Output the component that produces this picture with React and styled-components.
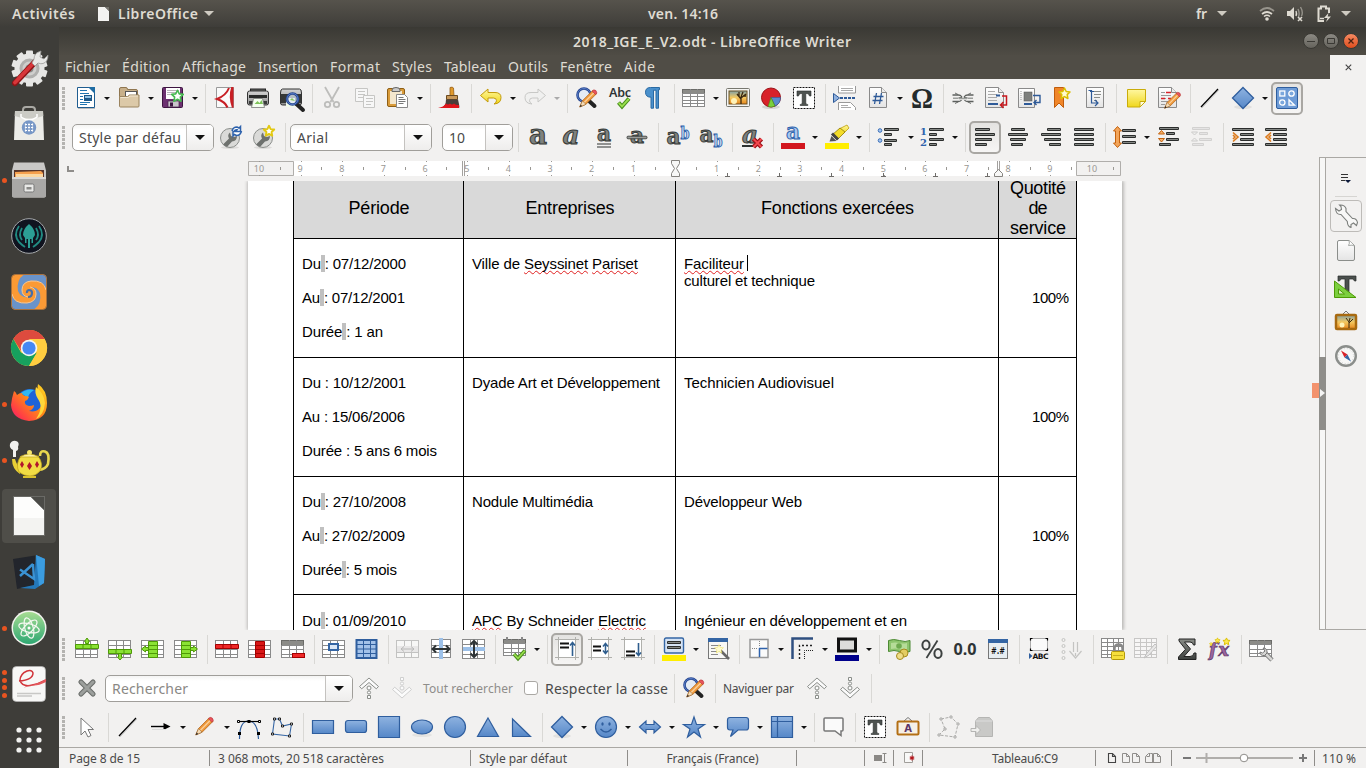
import React, { useLayoutEffect, useRef } from "react";
import styled, { createGlobalStyle, css } from "styled-components";

const UI = '"Noto Sans", "Open Sans", sans-serif';
const DOC = '"Liberation Sans", Arial, sans-serif';

const Global = createGlobalStyle`
  * { box-sizing: border-box; }
  html, body, #root { margin: 0; padding: 0; }
  body { width: 1366px; height: 768px; overflow: hidden; background: #f2f1f0; font-family: ${UI}; color: #3c3c3c; }
  svg { display: block; flex: none; }
`;

/* ---------- text fitted to a given width by letter spacing ---------- */
const FitBox = styled.span`
  display: inline-block;
  flex: none;
  white-space: pre;
  width: ${(p) => p.$w}px;
`;
function Fit({ w, children, className }) {
  const ref = useRef(null);
  useLayoutEffect(() => {
    const el = ref.current;
    const range = document.createRange();
    range.selectNodeContents(el);
    el.style.letterSpacing = "0px";
    const natural = range.getBoundingClientRect().width;
    const count = Math.max(1, el.textContent.length - 1);
    el.style.letterSpacing = `${(w - natural) / count}px`;
  }, [w]);
  return (
    <FitBox ref={ref} $w={w} className={className}>
      {children}
    </FitBox>
  );
}

/* ---------- icons ---------- */
const Defs = () => (
  <DefsSvg>
    <defs>
      <linearGradient id="blue" x1="0" y1="0" x2="0" y2="1">
        <stop offset="0" stopColor="#8fb3e0" />
        <stop offset="1" stopColor="#5587c8" />
      </linearGradient>
      <linearGradient id="paper" x1="0" y1="0" x2="0" y2="1">
        <stop offset="0" stopColor="#ffffff" />
        <stop offset="1" stopColor="#e4e4e4" />
      </linearGradient>
      <linearGradient id="gold" x1="0" y1="0" x2="0" y2="1">
        <stop offset="0" stopColor="#fff7a0" />
        <stop offset="1" stopColor="#f0d71c" />
      </linearGradient>
      <linearGradient id="sunset" x1="0" y1="0" x2="0" y2="1">
        <stop offset="0" stopColor="#7fa0a8" />
        <stop offset="0.5" stopColor="#f3c860" />
        <stop offset="1" stopColor="#e8861c" />
      </linearGradient>
      <linearGradient id="metal" x1="0" y1="0" x2="0" y2="1">
        <stop offset="0" stopColor="#d4d4d4" />
        <stop offset="1" stopColor="#8f8f8f" />
      </linearGradient>
      <linearGradient id="steel" x1="0" y1="0" x2="0" y2="1">
        <stop offset="0" stopColor="#8a8d88" />
        <stop offset="1" stopColor="#3d403e" />
      </linearGradient>
      <linearGradient id="atomg" x1="0" y1="0" x2="0" y2="1">
        <stop offset="0" stopColor="#a6dc92" />
        <stop offset="1" stopColor="#2fa873" />
      </linearGradient>
      <linearGradient id="foxg" x1="1" y1="0" x2="0" y2="1">
        <stop offset="0" stopColor="#ffe226" />
        <stop offset="0.45" stopColor="#ff8a16" />
        <stop offset="0.8" stopColor="#ff3b47" />
        <stop offset="1" stopColor="#e31587" />
      </linearGradient>
    </defs>
  </DefsSvg>
);
const DefsSvg = styled.svg`
  position: absolute;
  width: 0;
  height: 0;
`;

const Bars = ({ rows, c = "#2b2d2c", m = "#858885" }) =>
  rows.map(([x, y, w], i) => (
    <g key={i}>
      <rect x={x} y={y} width={w} height="3" rx="1" fill={c} />
      <rect x={x + 1} y={y + 1} width={w - 2} height="1" fill={m} />
    </g>
  ));

const Grid = ({ x = 0, y = 3, w = 23, h = 18, cols = 3, rows = 4, c = "#8a8a8a", head }) => (
  <g>
    <rect x={x + 0.5} y={y + 0.5} width={w - 1} height={h - 1} fill="#fff" stroke={c} />
    {head && <rect x={x + 0.5} y={y + 0.5} width={w - 1} height={Math.round(h / rows)} fill="#8c8c88" stroke="#6b6b68" />}
    {Array.from({ length: rows - 1 }, (_, i) => (
      <path key={"r" + i} d={`M${x} ${Math.round(y + ((i + 1) * h) / rows) + 0.5}h${w}`} stroke={c} />
    ))}
    {Array.from({ length: cols - 1 }, (_, i) => (
      <path key={"c" + i} d={`M${Math.round(x + ((i + 1) * w) / cols) + 0.5} ${y}v${h}`} stroke={c} />
    ))}
  </g>
);

const Letter = ({ x = 12, y = 18, s = 23, w = 16, children, fill = "#7f827e", stroke = "#353937", italic }) => (
  <text
    x={x}
    y={y}
    fontSize={s}
    textAnchor="middle"
    textLength={w}
    lengthAdjust="spacingAndGlyphs"
    fontFamily="DejaVu Serif, serif"
    fontWeight="bold"
    fontStyle={italic ? "italic" : "normal"}
    fill={fill}
    stroke={stroke}
    strokeWidth="1"
  >
    {children}
  </text>
);

const Lens = ({ x = 10, y = 10, r = 6.5 }) => (
  <g>
    <path d={`M${x + 4} ${y + 5}L${x + 10.5} ${y + 11}`} stroke="#222" strokeWidth="4" strokeLinecap="round" />
    <circle cx={x} cy={y} r={r} fill="#dfe8f5" fillOpacity="0.75" stroke="#26458f" strokeWidth="2.6" />
    <circle cx={x} cy={y} r={r} fill="none" stroke="#5b82cc" strokeWidth="0.9" />
  </g>
);

const Pencil = ({ t }) => (
  <g transform={t}>
    <path d="M2 21l3-7L17 2l4 4L9 18z" fill="#ef9a3c" stroke="#b3641a" strokeWidth="0.9" />
    <path d="M7 16L19 4" stroke="#fbd09a" strokeWidth="1.5" />
    <path d="M16 3l2-1.5q3 0 3.500 3.500L20 7z" fill="#e8555c" stroke="#b02a32" strokeWidth="0.6" />
    <path d="M2 21l3-7 4 4z" fill="#f4dcb8" stroke="#8a5a22" strokeWidth="0.6" />
    <path d="M2 21l1-2.600 1.600 1.600z" fill="#222" />
  </g>
);

const Star = ({ x, y, s = 1, fill = "#fff", stroke = "#dcbf00", sw = 1.5 }) => (
  <path
    transform={`translate(${x} ${y}) scale(${s})`}
    d="M0-5.500L1.700-2 5.500-1.600 2.700 1.100 3.400 5 0 3.100-3.400 5-2.700 1.100-5.500-1.600-1.700-2z"
    fill={fill}
    stroke={stroke}
    strokeWidth={sw}
    strokeLinejoin="round"
  />
);

const Paper = ({ x = 3, y = 2, w = 18, h = 20, fold = true, stroke = "#8a8a8a" }) => (
  <g>
    <path
      d={
        fold
          ? `M${x + 0.5} ${y + 0.5}h${w - 6}l5 5v${h - 6}h-${w - 1}z`
          : `M${x + 0.5} ${y + 0.5}h${w - 1}v${h - 1}h-${w - 1}z`
      }
      fill="url(#paper)"
      stroke={stroke}
    />
    {fold && <path d={`M${x + w - 5.5} ${y + 0.5}v5h5`} fill="#ececec" stroke={stroke} />}
  </g>
);

const Chevrons = ({ down, dim }) => (
  <g
    transform={down ? "rotate(180 12 12)" : undefined}
    fill="#fbfbfb"
    stroke={dim ? "#cfcfcf" : "#8b8e8a"}
    strokeWidth="1"
    strokeLinejoin="round"
  >
    <path d="M12 2l9.500 8.500-2.200 2.300L12 6.500l-7.300 6.300-2.200-2.300z" />
    <circle cx="12" cy="12" r="2" />
    <circle cx="12" cy="16.500" r="1.600" />
    <path d="M10.500 19.500h3v3h-3z" />
  </g>
);

const AnchorFrame = ({ children }) => (
  <g>
    <path d="M3.500 0v23M20.500 0v23M0 2.500h24M0 20.500h24" stroke="#b0b0ac" />
    <rect x="4" y="3" width="16" height="17" fill="#fff" />
    {children}
  </g>
);

const TextFrame = () => (
  <g>
    <rect x="1.500" y="1.500" width="21" height="21" fill="#fff" stroke="#111" strokeDasharray="2 1" />
    <path d="M5 5h14v5h-1.500q-.5-2.500-2.500-2.500h-1.200V17q0 1.500 2 1.500v1H8.200v-1q2 0 2-1.500V7.500H9Q7 7.500 6.500 10H5z" fill="#4e5350" stroke="#2a2d2b" strokeWidth="0.6" />
  </g>
);

const art = {
  newDoc: (
    <g transform="translate(1 0)">
      <path d="M3.500 1.500h12l5 5v15h-17z" fill="#fff" stroke="#1f5d90" />
      <path d="M14 1h7v7z" fill="#1f6ca3" />
      <path d="M6 4.500h7M6 7.500h9M6 10.500h3M6 13.500h3M6 16.500h10M6 18.500h7" stroke="#1f74b0" />
      <rect x="10" y="9" width="8" height="6" fill="#1c5787" />
      <rect x="11" y="10" width="6" height="2" fill="#8fc1e4" />
      <path d="M4 22.500h17" stroke="#bbb" />
    </g>
  ),
  open: (
    <g>
      <path d="M2.500 3q0-1.500 1.500-1.500h5q1.500 0 1.500 2h8.500q1.500 0 1.500 1.500v14h-18z" fill="#c8b08a" stroke="#8f7650" />
      <rect x="8.500" y="5.500" width="11" height="7" fill="#fff" stroke="#555" />
      <path d="M2.500 10.500h8l2-1.500h9.500v11q0 1-1 1h-17.500q-1 0-1-1z" fill="#dcc9a8" stroke="#9b845f" />
      <path d="M3.500 11.500h8l1.500-1.500h8" stroke="#f1e6d0" fill="none" />
    </g>
  ),
  save: (
    <g>
      <rect x="1.500" y="1.500" width="20" height="20" rx="1" fill="#6c3070" stroke="#3d1540" />
      <rect x="5" y="2" width="14" height="11" fill="#fff" />
      <path d="M6 4.500h12M6 6.500h12M6 8.500h12" stroke="#b9b3ba" />
      <rect x="7" y="15" width="11" height="6" fill="#c9c4ca" stroke="#45204a" strokeWidth="0.700" />
      <rect x="9" y="16.500" width="3" height="4" fill="#3d1540" />
      <Star x={16.500} y={10} s={1.050} stroke="#45b94f" />
    </g>
  ),
  pdf: (
    <g>
      <path d="M3.500 1.500h17v20h-17z" fill="#fafafa" stroke="#999" />
      <path d="M16 2q-3 7.500-12 11 8 2.500 10.500 8.500" fill="none" stroke="#c81e24" strokeWidth="2" />
      <path d="M20.500 1v21l-1.600-.5q-3.900-10-.7-20.500z" fill="#c81e24" />
    </g>
  ),
  print: (
    <g>
      <rect x="4.500" y="3" width="15" height="6" fill="#5e615f" stroke="#222" />
      <path d="M1.500 7q0-2 2-2h17q2 0 2 2v10q0 2-2 2h-17q-2 0-2-2z" fill="url(#metal)" stroke="#333" />
      <path d="M3 9h18v3H3z" fill="#292b2a" />
      <path d="M3 15h18v3H3z" fill="#3a3c3b" />
      <path d="M7.500 12.500h9l2 9h-13z" fill="#f5fff0" stroke="#777" strokeWidth="0.800" />
      <path d="M8.500 18l3-3 2 2 2-3 1.500 4z" fill="#7fc45a" />
    </g>
  ),
  preview: (
    <g>
      <path d="M1.500 7q0-4 2-4h17q2 0 2 4v10q0 2-2 2h-17q-2 0-2-2z" fill="url(#metal)" stroke="#333" />
      <path d="M2 8h20v9H2z" fill="#363837" />
      <path d="M7 12h9v9H7z" fill="#f2fbe8" />
      <Lens x={13.500} y={13} r={5.500} />
      <path d="M11 14l2-2 3 3z" fill="#86c35f" />
    </g>
  ),
  cut: (
    <g fill="none" stroke="#bdbdbb">
      <path d="M5 1l8.500 15M19 1l-8.500 15" strokeWidth="1.800" />
      <circle cx="7.500" cy="18.500" r="2.700" strokeWidth="1.800" />
      <circle cx="16.500" cy="18.500" r="2.700" strokeWidth="1.800" />
    </g>
  ),
  copy: (
    <g stroke="#c6c6c4" fill="#f7f7f7">
      <path d="M2.500 2.500h12v13h-12z" />
      <path d="M5 5.500h7M5 8.500h7M5 11.500h5" />
      <path d="M10.500 9.500h11v12h-11z" />
      <path d="M13 12.500h7M13 15.500h7M13 18.500h5" />
    </g>
  ),
  paste: (
    <g>
      <rect x="1.500" y="2.500" width="17" height="18" rx="1.500" fill="#d99b3a" stroke="#8f5f15" />
      <rect x="4" y="5" width="12" height="13" fill="#f4e7cd" />
      <path d="M6 4q0-2.500 4-2.500t4 2.500v1.500H6z" fill="#c9c9c9" stroke="#666" />
      <path d="M10.500 8.500h8l3 3v10h-11z" fill="#fff" stroke="#888" />
      <path d="M12.500 11.500h5M12.500 13.500h7M12.500 15.500h7M12.500 17.500h5" stroke="#777" />
    </g>
  ),
  brush: (
    <g>
      <path d="M12 1.500q2.500-1 3.500.5l.5 8h-4z" fill="#e09a2c" stroke="#95601a" strokeWidth="0.800" />
      <path d="M8.500 9.500h11v4h-11z" fill="#c9995a" stroke="#6b4a20" />
      <path d="M8 13.500h12q1 4 1.500 8H3q5-1 5-8z" fill="#4a3f3b" />
      <path d="M0 22q6-1 8-4.500 2 2 4 0 2 2 4 0 2 2 5 1.500V22z" fill="#e0161c" />
    </g>
  ),
  undo: (
    <path d="M9 3L1.500 9.500 9 16v-4h5.500q3 0 3 2.700 0 1.800-2.500 3.300 7-.5 7-6.500 0-5-6-5H9z" fill="url(#gold)" stroke="#c39b0c" strokeLinejoin="round" />
  ),
  redo: (
    <path d="M15 3l7.500 6.500L15 16v-4H9.500q-3 0-3 2.700 0 1.800 2.500 3.300-7-.5-7-6.500 0-5 6-5h7z" fill="#f0f0ef" stroke="#c8c8c6" strokeLinejoin="round" />
  ),
  find: (
    <g>
      <Lens x={9} y={9} />
      <Pencil t="translate(3 2.500) scale(.88)" />
    </g>
  ),
  spell: (
    <g>
      <text x="12" y="11" textAnchor="middle" fontFamily="Noto Sans" fontSize="12.500" fontWeight="600" fill="#2e3436" textLength="22">
        Abc
      </text>
      <path d="M10.500 16.500l3.500 4 7-8" fill="none" stroke="#4a8f1c" strokeWidth="4" />
      <path d="M10.800 16.800l3.200 3.500 6.800-7.500" fill="none" stroke="#9be04e" strokeWidth="1.800" />
    </g>
  ),
  pilcrow: (
    <path d="M18.500 1.500h-9q-5 0-5 4.700 0 5 5.500 5v11h2.500v-18h2.500v18h2.500v-18.500h1z" fill="#4a90cc" stroke="#2a6aa3" />
  ),
  table: <Grid head rows={5} />,
  image: (
    <g>
      <rect x="0.500" y="2.500" width="23" height="18" rx="1" fill="#f4f4f2" stroke="#77776f" />
      <rect x="3" y="5" width="18" height="13" fill="url(#sunset)" stroke="#6b5020" />
      <circle cx="8" cy="15" r="3" fill="#fff3b8" />
      <path d="M15 18V11M15 13l-4-5M15 11l2-5M15 12l5-4M13 10V6M17 10l3 0" stroke="#3a2810" strokeWidth="1.300" fill="none" />
    </g>
  ),
  chart: (
    <g>
      <ellipse cx="12" cy="21" rx="9" ry="2" fill="#d6d6d4" />
      <circle cx="12" cy="11.500" r="9.500" fill="#d8222a" stroke="#9c1218" />
      <path d="M12 11.500h9.500a9.500 9.500 0 0 1-5.500 8.600z" fill="#5b8bd0" stroke="#2f5a9c" strokeWidth="0.600" />
      <path d="M12 11.500l4 8.600a9.500 9.500 0 0 1-7 .5z" fill="#7bd13c" stroke="#3f8f14" strokeWidth="0.600" />
    </g>
  ),
  textbox: <TextFrame />,
  pagebreak: (
    <g>
      <path d="M5.500 0v7h17V0" fill="#fff" stroke="#999" />
      <path d="M8 2.500h12M8 4.500h12" stroke="#aaa" />
      <path d="M.5 7.500v9l6-4.500z" fill="#8fb0de" stroke="#2e5a98" />
      <path d="M7 12h16" stroke="#2e5a98" strokeWidth="2" strokeDasharray="3 1" />
      <path d="M5.500 24v-7.500h12l5 5V24" fill="#fff" stroke="#999" />
      <path d="M8 19.500h7M8 21.500h10" stroke="#aaa" />
    </g>
  ),
  field: (
    <g>
      <Paper y={1} h={21} />
      <path d="M10.500 7l-2 11M15.500 7l-2 11M7.500 10.500h10M6.500 14.500h10" stroke="#2e5a98" strokeWidth="1.300" />
    </g>
  ),
  omega: (
    <text x="12" y="21.500" textAnchor="middle" fontFamily="Liberation Serif, serif" fontWeight="bold" fontSize="30" fill="#252b2c" textLength="22" lengthAdjust="spacingAndGlyphs">
      Ω
    </text>
  ),
  link: (
    <g fill="none" stroke="#5d605d">
      <path d="M1.500 9h6q2 0 3 1.500t-3 1.500M1.500 15.500h6q2 0 3-1.500M22.500 9h-6q-2 0-3 1.500t3 1.500M22.500 15.500h-6q-2 0-3-1.500" strokeWidth="1.300" />
      <path d="M2 12.200h5M17 12.200h5M8 12.500h8" stroke="#9b9e9b" strokeWidth="1.600" />
      <path d="M4 7l3 1.500M20 7l-3 1.500M4 17.500l3-1.500M20 17.500l-3-1.500" strokeWidth="0.900" />
    </g>
  ),
  footnote: (
    <g>
      <Paper x={1} y={1} w={19} h={21} />
      <path d="M4 5.500h7M4 8.500h9M4 11.500h9M4 14.500h9" stroke="#aaa" />
      <path d="M12 9.500h4M4 18h10" stroke="#2e5a98" strokeWidth="2" />
      <path d="M18 10h4.500v9h-6M19.500 16l-3 3 3 3" fill="none" stroke="#c8161c" strokeWidth="1.500" />
    </g>
  ),
  endnote: (
    <g>
      <Paper x={1} y={2} w={17} h={20} fold={false} />
      <rect x="7" y="6" width="8" height="9" fill="#7d7f7d" stroke="#555" strokeWidth="0.500" />
      <path d="M4 5v10" stroke="#999" strokeDasharray="1 1" />
      <path d="M7 18h8" stroke="#2e5a98" strokeWidth="2" />
      <path d="M16 9.500h7v7h-6M19.500 14L17 16.500l2.500 2.500" fill="none" stroke="#2e5a98" strokeWidth="1.400" />
    </g>
  ),
  bookmark: (
    <g transform="translate(-1 0)">
      <path d="M5.500 1.500h9v20l-4.500-4.500-4.500 4.500z" fill="#f0862a" stroke="#c05c0c" />
      <Star x={15.500} y={7.500} s={1} fill="#fffbd0" />
    </g>
  ),
  crossref: (
    <g>
      <Paper x={3} y={1} w={18} h={21} fold={false} />
      <path d="M9 5.500h9M11 8.500h7M11 11.500h6M11 14.500h3" stroke="#8b8e8b" strokeWidth="1.200" />
      <path d="M5.500 4.500h3v12.500h6M12 14l3 3-3 3M7 5.500h4" fill="none" stroke="#2e5a98" strokeWidth="1.200" />
    </g>
  ),
  note: (
    <g>
      <path d="M3.500 3.500h18v12l-5.500 5.500H3.500z" fill="url(#gold)" stroke="#c9ac0a" />
      <path d="M21.500 15.500L16 21v-5.500z" fill="#fffce0" stroke="#c9ac0a" />
    </g>
  ),
  changes: (
    <g>
      <Paper x={1} y={1} w={19} h={21} />
      <path d="M4 6.500h4M4 9.500h10M4 12.500h5M4 15.500h7M4 18.500h4" stroke="#999" />
      <path d="M9 6.500h5M4 12.500h4M11 12.500h3" stroke="#d8222a" strokeWidth="1.500" />
      <Pencil t="translate(6 5) scale(.82)" />
    </g>
  ),
  line: (
    <g>
      <path d="M4 22L21 4" stroke="#ccc" />
      <path d="M3 21L20 3" stroke="#000" strokeWidth="1.300" />
    </g>
  ),
  diamond: (
    <g>
      <ellipse cx="12" cy="21" rx="9" ry="2" fill="#e2e1df" />
      <path d="M12 1.500L22.500 12 12 22.500 1.500 12z" fill="url(#blue)" stroke="#2f5e9e" strokeWidth="1.300" />
    </g>
  ),
  shapes: (
    <g>
      <rect x="1.500" y="1.500" width="21" height="21" rx="1.500" fill="#6d9bd6" stroke="#2f5e9e" />
      <g fill="#7ba7dc" stroke="#fff" strokeWidth="1.300">
        <rect x="4.800" y="5" width="5" height="5" />
        <circle cx="16.500" cy="7.500" r="2.700" />
        <circle cx="7.300" cy="16.500" r="2.700" />
        <path d="M14 13.700v5.500h5.500z" />
      </g>
    </g>
  ),
  styleUpdate: (
    <g>
      <ellipse cx="11" cy="22.500" rx="9" ry="1.500" fill="#dcdbd9" />
      <circle cx="11" cy="13" r="9.500" fill="#dadad8" stroke="#8b8e8b" />
      <path d="M4 19.500l6-6q-2-3.500 1-6l1 3.500 3 1 3-1q0 5-5 5.500l-5 5.500z" fill="#6e716e" />
      <path d="M13 6q1-4 5-4l2 1 1.500-1.500v5h-5l1.500-1.700q-2-.3-3 1.700M22.500 6q-1 4.500-5 4.500l-2.200-1-1.300 1.500V6.500h4.500" fill="#fff" stroke="#2e62ac" strokeWidth="1.500" />
    </g>
  ),
  styleNew: (
    <g>
      <ellipse cx="11" cy="22.500" rx="9" ry="1.500" fill="#dcdbd9" />
      <circle cx="11" cy="13" r="9.500" fill="#dadad8" stroke="#8b8e8b" />
      <path d="M4 19.500l6-6q-2-3.500 1-6l1 3.500 3 1 3-1q0 5-5 5.500l-5 5.500z" fill="#6e716e" />
      <Star x={17} y={6} s={0.950} stroke="#e3c912" sw={2} />
    </g>
  ),
  bold: <Letter s={27} w={18} y={19}>a</Letter>,
  italic: <Letter s={26} w={17} y={19} italic>a</Letter>,
  underline: (
    <g>
      <Letter y={16} s={23} w={14}>a</Letter>
      <path d="M5 19h14M5 22h14" stroke="#2e3230" strokeWidth="1.200" />
    </g>
  ),
  strike: (
    <g>
      <Letter y={18} s={22} w={14}>a</Letter>
      <rect x="2" y="11.200" width="20" height="2.600" rx="1" fill="#9a9c99" stroke="#2e3230" strokeWidth="0.800" />
    </g>
  ),
  superscript: (
    <g>
      <Letter x={7.500} y={19} s={23} w={14}>a</Letter>
      <Letter x={19} y={14} s={16} w={9} fill="#c5d8f2" stroke="#2e62ac">b</Letter>
    </g>
  ),
  subscript: (
    <g>
      <Letter x={7.500} y={17} s={23} w={14}>a</Letter>
      <Letter x={19} y={22} s={16} w={9} fill="#c5d8f2" stroke="#2e62ac">b</Letter>
    </g>
  ),
  clearFmt: (
    <g>
      <Letter x={10} y={18} s={25} w={16} italic>a</Letter>
      <path d="M2 21h11" stroke="#2e3230" strokeWidth="2" />
      <path d="M13.500 14l8 8M21.500 14l-8 8" stroke="#9c0e14" strokeWidth="4.500" />
      <path d="M13.500 14l8 8M21.500 14l-8 8" stroke="#f3484e" strokeWidth="2" />
    </g>
  ),
  fontColor: (
    <g>
      <Letter y={14} s={22} w={14} fill="#a9c6ee" stroke="#2e62ac">a</Letter>
      <rect x="0" y="18" width="24" height="6" fill="#d2161e" />
    </g>
  ),
  highlight: (
    <g>
      <path d="M14 4l8-4 2 3-6 6z" fill="url(#gold)" stroke="#bfa00a" strokeWidth="0.800" />
      <path d="M7 10l8-7 5 4-8 8z" fill="#f4dc28" stroke="#8e7a0a" strokeWidth="0.800" />
      <path d="M7 8.500l6 6" stroke="#444" strokeWidth="3" />
      <path d="M6.500 11l5 5-7 .5z" fill="#555" />
      <rect x="0" y="18" width="24" height="6" fill="#ffee00" />
    </g>
  ),
  bullets: (
    <g>
      <circle cx="3" cy="5.500" r="1.800" fill="#a7c6ee" stroke="#3a6fb8" />
      <circle cx="3" cy="15.500" r="1.800" fill="#a7c6ee" stroke="#3a6fb8" />
      <Bars rows={[[7, 3, 15], [7, 8, 8], [7, 14, 13], [7, 18, 8]]} />
    </g>
  ),
  numbers: (
    <g>
      <text x="2.500" y="10" fontSize="10" fontWeight="bold" textAnchor="middle" fontFamily="DejaVu Serif" fill="#2e62ac">1</text>
      <text x="2.500" y="21" fontSize="10" fontWeight="bold" textAnchor="middle" fontFamily="DejaVu Serif" fill="#2e62ac">2</text>
      <Bars rows={[[8, 3, 15], [8, 8, 8], [8, 13, 15], [8, 18, 8]]} />
    </g>
  ),
  alignLeft: <Bars rows={[[2, 3, 15], [2, 8, 20], [2, 13, 17], [2, 18, 12]]} />,
  alignCenter: <Bars rows={[[5, 3, 14], [2, 8, 20], [4, 13, 16], [5, 18, 12]]} />,
  alignRight: <Bars rows={[[8, 3, 14], [2, 8, 20], [5, 13, 17], [10, 18, 12]]} />,
  justify: <Bars rows={[[2, 3, 20], [2, 8, 20], [2, 13, 20], [2, 18, 20]]} />,
  lineSpacing: (
    <g>
      <path d="M4.500 1.500L8.500 6h-2v12h2l-4 4.500-4-4.500h2V6h-2z" fill="#f3a55a" stroke="#c4620e" />
      <Bars rows={[[9, 4, 14], [9, 10, 14], [9, 16, 14]]} />
    </g>
  ),
  spaceUp: (
    <g>
      <path d="M4.500 5.500l3 3.500h-6zM4.500 17l3-3.500h-6z" fill="#f6b26b" stroke="#c4620e" />
      <Bars rows={[[2, 2, 20], [9, 7, 9], [9, 13, 13], [2, 18, 12]]} />
    </g>
  ),
  spaceDown: (
    <g opacity="0.6">
      <path d="M1.500 7h6l-3 3zM1.500 16h6l-3-3z" fill="#eee" stroke="#b5b5b3" />
      <Bars rows={[[2, 2, 18], [9, 7, 9], [9, 13, 13], [2, 18, 12]]} c="#bdbdbb" m="#ddd" />
    </g>
  ),
  indent: (
    <g>
      <path d="M2 7.500l5 4.500-5 4.500M2 10l2 2-2 2" fill="none" stroke="#dc7a1c" strokeWidth="1.600" />
      <Bars rows={[[1, 3, 22], [9, 8, 14], [9, 13, 14], [1, 18, 22]]} />
    </g>
  ),
  outdent: (
    <g>
      <path d="M7 7.500L2 12l5 4.500M7 10l-2 2 2 2" fill="none" stroke="#dc7a1c" strokeWidth="1.600" />
      <Bars rows={[[1, 3, 22], [9, 8, 14], [9, 13, 14], [1, 18, 22]]} />
    </g>
  ),
  rowAbove: (
    <g>
      <Grid />
      <path d="M12 1l2.500 3.500h-1v2h-3v-2h-1z" fill="#8ae234" stroke="#4e9a06" />
      <path d="M.5 7.500h23v4H.5z" fill="#8ae234" stroke="#4e9a06" />
      <path d="M8 7.500v4M16 7.500v4" stroke="#4e9a06" />
    </g>
  ),
  rowBelow: (
    <g>
      <Grid />
      <path d="M12 23l2.500-3h-1v-3.500h-3V20h-1z" fill="#8ae234" stroke="#4e9a06" />
      <path d="M.5 12.500h23v4H.5z" fill="#8ae234" stroke="#4e9a06" />
      <path d="M8 12.500v4M16 12.500v4" stroke="#4e9a06" />
    </g>
  ),
  colLeft: (
    <g>
      <Grid />
      <path d="M.5 12l4-3v1.500h3v3h-3V15z" fill="#8ae234" stroke="#4e9a06" />
      <path d="M7.500 4.500h9v16h-9z" fill="#8ae234" stroke="#4e9a06" />
      <path d="M7.500 8.500h9M7.500 12.500h9M7.500 16.500h9" stroke="#4e9a06" />
    </g>
  ),
  colRight: (
    <g>
      <Grid />
      <path d="M23.500 12l-4-3v1.500h-3v3h3V15z" fill="#8ae234" stroke="#4e9a06" />
      <path d="M7.500 4.500h9v16h-9z" fill="#8ae234" stroke="#4e9a06" />
      <path d="M7.500 8.500h9M7.500 12.500h9M7.500 16.500h9" stroke="#4e9a06" />
    </g>
  ),
  delRow: (
    <g>
      <Grid />
      <path d="M.5 7.500h23v4H.5z" fill="#ef2929" stroke="#a40000" />
      <path d="M8 7.500v4M16 7.500v4" stroke="#a40000" />
    </g>
  ),
  delCol: (
    <g>
      <Grid />
      <path d="M7.500 4.500h9v16h-9z" fill="#d81818" stroke="#a40000" />
      <path d="M7.500 8.500h9M7.500 12.500h9M7.500 16.500h9" stroke="#a40000" />
    </g>
  ),
  delTable: (
    <g>
      <Grid head />
      <rect x="11.500" y="16.500" width="12" height="4" fill="#ef2929" stroke="#a40000" />
    </g>
  ),
  selCell: (
    <g>
      <Grid />
      <rect x="7" y="7" width="9" height="6" fill="#dbe7f6" stroke="#3465a4" strokeWidth="2" />
    </g>
  ),
  selTable: (
    <g>
      <rect x="1.500" y="3" width="20" height="18" fill="#a3c2ea" stroke="#2f5e9e" strokeWidth="2" />
      <path d="M2 7.500h20M2 12h20M2 16.500h20M8.500 3v18M15.500 3v18" stroke="#2f5e9e" />
    </g>
  ),
  merge: (
    <g opacity="0.45">
      <Grid rows={3} />
      <rect x="1" y="9" width="21" height="6" fill="#ddd" />
      <path d="M5 12h13M8 9.500L5 12l3 2.500M15 9.500l3 2.500-3 2.500" stroke="#777" fill="none" />
    </g>
  ),
  splitV: (
    <g>
      <Grid cols={2} rows={3} x={2} w={20} y={2} h={19} />
      <rect x="10" y="1" width="4" height="21" fill="#9cc0e8" />
      <path d="M3 12h18M7 8.500L3.500 12 7 15.500M17 8.500l3.500 3.500-3.500 3.500" fill="none" stroke="#2e3436" strokeWidth="2" />
    </g>
  ),
  splitH: (
    <g>
      <Grid cols={3} rows={4} y={2} h={20} />
      <rect x="1" y="10" width="22" height="4" fill="#9cc0e8" />
      <path d="M12 4v16M8.500 7.500L12 4l3.500 3.500M8.500 16.500L12 20l3.500-3.500" fill="none" stroke="#2e3436" strokeWidth="2" />
    </g>
  ),
  tableOpt: (
    <g>
      <Grid head y={2} h={17} />
      <path d="M4 0v4M19 0v4" stroke="#888" strokeWidth="2" />
      <path d="M11 17l4 4.500 7-8" fill="none" stroke="#4a8f1c" strokeWidth="3.600" />
      <path d="M11.200 17.200l3.800 4 6.800-7.500" fill="none" stroke="#9be04e" strokeWidth="1.600" />
    </g>
  ),
  vTop: (
    <AnchorFrame>
      <path d="M5 6.500h9M5 10.500h9" stroke="#111" strokeWidth="2.200" />
      <path d="M17.500 19V6M15 8.500l2.500-3 2.500 3" fill="none" stroke="#2f5e8e" strokeWidth="1.600" />
    </AnchorFrame>
  ),
  vMid: (
    <AnchorFrame>
      <path d="M5 9.500h8M5 13.500h8" stroke="#111" strokeWidth="2.200" />
      <path d="M17.500 7v9M15 9.500l2.500-3 2.500 3M15 13.500l2.500 3 2.500-3" fill="none" stroke="#2f5e8e" strokeWidth="1.500" />
    </AnchorFrame>
  ),
  vBot: (
    <AnchorFrame>
      <path d="M5 14.500h9M5 18.500h9" stroke="#111" strokeWidth="2.200" />
      <path d="M17.500 6v12M15 15.500l2.500 3 2.500-3" fill="none" stroke="#2f5e8e" strokeWidth="1.600" />
    </AnchorFrame>
  ),
  bgColor: (
    <g>
      <rect x="2.500" y="1" width="19" height="15" rx="1.500" fill="#d5e3f4" stroke="#3465a4" strokeWidth="1.400" />
      <Bars rows={[[5, 4, 14], [5, 9, 14]]} />
      <rect x="0" y="18" width="24" height="6" fill="#ffee00" />
    </g>
  ),
  autofmt: (
    <g>
      <rect x="2.500" y="1.500" width="19" height="20" fill="#f8f8f6" stroke="#777" />
      <rect x="2" y="1" width="20" height="4" fill="#3465a4" />
      <path d="M5 8.500h10M5 11.500h7M5 14.500h6M5 17.500h7" stroke="#8a8a8a" />
      <path d="M14 13l9 9" stroke="#666" strokeWidth="2.600" />
      <Star x={13} y={12} s={0.800} fill="#fffbd0" stroke="#efe04a" sw={0.600} />
    </g>
  ),
  borders: (
    <g>
      <rect x="3" y="2.500" width="18" height="18" fill="#fafafa" stroke="#999" strokeWidth="1.500" />
      <path d="M5 11.500h6M12.500 4v6" stroke="#888" strokeDasharray="1 1" />
      <path d="M12.500 11v9M12 11.500h8.500" stroke="#2e62ac" strokeWidth="1.500" />
    </g>
  ),
  borderStyle: (
    <g>
      <path d="M1.500 22V1.500H22" fill="none" stroke="#2f4f80" strokeWidth="2.500" />
      <path d="M8.500 22V8.500H22" fill="none" stroke="#222" strokeWidth="1.400" strokeDasharray="2 2" />
      <path d="M13.500 22v-8.500H22" fill="none" stroke="#222" strokeDasharray="1 1" />
    </g>
  ),
  borderColor: (
    <g>
      <rect x="3.500" y="2" width="17" height="12" fill="#dcdcda" stroke="#111" strokeWidth="3" />
      <rect x="0" y="18" width="24" height="6" fill="#00008b" />
    </g>
  ),
  money: (
    <g>
      <path d="M1.500 3.500q5-2 11 0t10.500 0v11q-5 2-10.500 0t-11 0z" fill="#8cc46c" stroke="#4c8a34" />
      <path d="M4 6q4-1 8 0t8 0v6q-4 1-8 0t-8 0z" fill="#b5dc98" />
      <circle cx="12" cy="9" r="2.800" fill="#6da94e" />
      <circle cx="17" cy="16" r="4" fill="#e4cd62" stroke="#a68b1e" />
      <circle cx="13" cy="19" r="3.500" fill="#efdd88" stroke="#a68b1e" />
    </g>
  ),
  percent: (
    <g fill="none" stroke="#3d4140" strokeWidth="2">
      <ellipse cx="6" cy="8" rx="3.600" ry="4.500" />
      <ellipse cx="18" cy="16.500" rx="3.600" ry="4.500" />
      <path d="M17.500 3.500L6.500 21" strokeWidth="1.800" />
    </g>
  ),
  decimal: (
    <text x="12" y="17.500" textAnchor="middle" fontFamily="Noto Sans" fontWeight="bold" fontSize="15.500" fill="#2e3436" textLength="23" lengthAdjust="spacingAndGlyphs">
      0.0
    </text>
  ),
  numFmt: (
    <g>
      <rect x="2.500" y="2.500" width="19" height="19" fill="#e8eef2" stroke="#777" />
      <rect x="2" y="2" width="20" height="4" fill="#3465a4" />
      <text x="12" y="16.500" textAnchor="middle" fontFamily="DejaVu Sans" fontWeight="bold" fontSize="9" fill="#111" textLength="14" lengthAdjust="spacingAndGlyphs">#.#</text>
    </g>
  ),
  caption: (
    <g>
      <rect x="3.500" y="1.500" width="17" height="12" fill="#fafafa" stroke="#aaa" />
      <path d="M3.500 3.500v-2h2M18.500 1.500h2v2M3.500 11.500v2h2M18.500 13.500h2v-2" stroke="#000" fill="none" strokeWidth="1.200" />
      <path d="M2 16v6l3.500-3z" fill="#2f5e9e" />
      <text x="13.500" y="22" textAnchor="middle" fontFamily="DejaVu Sans" fontWeight="bold" fontSize="7.500" fill="#111" textLength="16">ABC</text>
    </g>
  ),
  sort: (
    <g fill="none" stroke="#c4c4c2">
      <circle cx="3.500" cy="3" r="1.500" />
      <circle cx="3.500" cy="9" r="1.500" />
      <circle cx="3.500" cy="15" r="1.500" />
      <circle cx="3.500" cy="21" r="1.500" />
      <path d="M13.500 5v10M17.500 5v10M9.500 14l6 7 6-7M15.500 16v3" strokeWidth="1.200" />
    </g>
  ),
  protect: (
    <g>
      <Grid cols={4} rows={5} y={1} h={20} />
      <path d="M13.500 14v-2.500q0-4 4-4t4 4V14" fill="none" stroke="#888" strokeWidth="2.400" />
      <rect x="10.500" y="14.500" width="13" height="8" rx="1" fill="#f6e03c" stroke="#b3990a" />
      <path d="M12 18.500h10" stroke="#c9b01a" />
    </g>
  ),
  unprotect: (
    <g opacity="0.4">
      <Grid cols={4} rows={5} y={1} h={20} />
      <path d="M10 21l3-5 8-9 2 2-8 9z" fill="#ddd" stroke="#777" />
    </g>
  ),
  sum: (
    <path d="M4 2h16v6h-1.500q-.5-3-3.500-3H9.500l6 7-6.500 7.500h6q3.500 0 4-3.500H21v6.500H3.500v-2.500l7-7.700L4 4z" fill="url(#steel)" stroke="#222" strokeWidth="1" />
  ),
  formula: (
    <g>
      <text x="11" y="19" textAnchor="middle" fontFamily="DejaVu Serif" fontStyle="italic" fontWeight="bold" fontSize="18" fill="#9a659f" stroke="#5c3566" strokeWidth="0.700" textLength="20">fx</text>
      <Star x={9.500} y={3.500} s={0.480} fill="#fce94f" />
      <Star x={18.500} y={4.500} s={0.650} fill="#fce94f" />
      <Star x={3} y={7} s={0.300} fill="#fce94f" />
    </g>
  ),
  tableProps: (
    <g>
      <Grid head h={17} />
      <path d="M23 23l-7-7" stroke="#777" strokeWidth="4.500" />
      <path d="M23 23l-7-7" stroke="#d6d6d4" strokeWidth="2.600" />
      <path d="M11 15q0 4 4.500 3.500l2.500-2.500q.5-5-4-5l2 3-2.500 2z" fill="#d6d6d4" stroke="#777" />
    </g>
  ),
  close: (
    <g>
      <path d="M6 6l12 12M18 6L6 18" stroke="#6b6e6b" strokeWidth="5.200" strokeLinecap="round" />
      <path d="M6 6l12 12M18 6L6 18" stroke="#9c9f9c" strokeWidth="3" strokeLinecap="round" />
    </g>
  ),
  prev: <Chevrons />,
  next: <Chevrons down />,
  nextDim: <Chevrons down dim />,
  cursor: (
    <path d="M6 3v17l4-4 3 6 3-1.500-3-6h5.500z" fill="#fff" stroke="#777" strokeLinejoin="round" />
  ),
  arrow: (
    <g>
      <path d="M2 11.500h14" stroke="#000" strokeWidth="1.400" />
      <path d="M14.500 8l7 3.500-7 3.500z" fill="#000" />
      <path d="M3 14.500h14" stroke="#ddd" />
    </g>
  ),
  pencil: <Pencil t="translate(1 1) scale(.9)" />,
  curve: (
    <g fill="none">
      <path d="M2.500 24q0-18 9-18t10 18" stroke="#2f5e9e" strokeWidth="1.200" />
      <path d="M2 6.500h20" stroke="#000" strokeWidth="1.200" />
      <path d="M.5 5.500h2v2h-2zM21.500 5.500h2v2h-2z" fill="#fff" stroke="#000" />
      <path d="M10.500 5h3v3h-3zM1 17h3v3H1zM20 17h3v3h-3z" fill="#000" />
    </g>
  ),
  polygon: (
    <g fill="none">
      <path d="M4.500 4L2.500 19l17 2 2-12-9 2-3-7z" stroke="#3465a4" strokeWidth="1.100" />
      <path d="M3.500 3h2v2h-2zM8.500 3h2v2h-2zM11.500 10h2v2h-2zM20.500 8h2v2h-2zM1.500 18h2v2h-2zM18.500 20h2v2h-2z" fill="#fff" stroke="#222" />
    </g>
  ),
  rect: <path d="M1.500 5.500h21v13h-21z" fill="url(#blue)" stroke="#2f5e9e" strokeWidth="1.200" />,
  roundRect: <rect x="1.500" y="5.500" width="21" height="12" rx="2.500" fill="url(#blue)" stroke="#2f5e9e" strokeWidth="1.200" />,
  square: <path d="M1.500 1.500h21v21h-21z" fill="url(#blue)" stroke="#2f5e9e" strokeWidth="1.200" />,
  ellipse: (
    <g>
      <ellipse cx="12" cy="20" rx="10" ry="2" fill="#e4e3e1" />
      <ellipse cx="12" cy="12" rx="10.500" ry="7" fill="url(#blue)" stroke="#2f5e9e" strokeWidth="1.200" />
    </g>
  ),
  circle: <circle cx="12" cy="12" r="10.500" fill="url(#blue)" stroke="#2f5e9e" strokeWidth="1.200" />,
  triangle: <path d="M12 3l10.500 18.500h-21z" fill="url(#blue)" stroke="#2f5e9e" strokeWidth="1.200" />,
  rtriangle: <path d="M3.500 4l18 17.500h-18z" fill="url(#blue)" stroke="#2f5e9e" strokeWidth="1.200" />,
  smiley: (
    <g>
      <circle cx="12" cy="12" r="10.500" fill="url(#blue)" stroke="#2f5e9e" strokeWidth="1.200" />
      <ellipse cx="8.500" cy="9" rx="1.200" ry="1.800" fill="#2f5e9e" />
      <ellipse cx="15.500" cy="9" rx="1.200" ry="1.800" fill="#2f5e9e" />
      <path d="M6.500 14q5.500 6 11 0" fill="none" stroke="#2f5e9e" strokeWidth="1.400" />
    </g>
  ),
  dblArrow: (
    <path d="M1.500 12L8 6v3.500h8V6l6.500 6-6.500 6v-3.500H8V18z" fill="url(#blue)" stroke="#2f5e9e" strokeWidth="1.200" />
  ),
  star: <path d="M12 2l2.500 7.500h8L16 14l2.500 8-6.500-5-6.500 5L8 14 1.500 9.500h8z" fill="url(#blue)" stroke="#2f5e9e" strokeWidth="1.200" />,
  callout: (
    <path d="M4 2.500h16q2.500 0 2.500 2.500v7.500q0 2.500-2.500 2.500h-8L4.500 21.500 7 15H4q-2.500 0-2.500-2.500V5Q1.500 2.500 4 2.500z" fill="url(#blue)" stroke="#2f5e9e" strokeWidth="1.200" />
  ),
  flow: (
    <g>
      <path d="M1.500 1.500h21v21h-21z" fill="url(#blue)" stroke="#2f5e9e" strokeWidth="1.200" />
      <path d="M7.500 2v20M2 6.500h20" stroke="#2f5e9e" strokeWidth="1.200" />
    </g>
  ),
  comment: (
    <path d="M2 4q0-1 1-1h17q1 0 1 1v11q0 1-1 1h-1v4.500L13 16H3q-1 0-1-1z" fill="#fafafa" stroke="#777" strokeWidth="1.500" />
  ),
  fontwork: (
    <g>
      <path d="M8 6l4-3.500L16 6" fill="none" stroke="#777" />
      <rect x="1.500" y="6.500" width="21" height="13" rx="1" fill="#f6f0e6" stroke="#b36f14" strokeWidth="2" />
      <text x="12" y="17" textAnchor="middle" fontFamily="DejaVu Sans" fontWeight="bold" fontSize="10" fill="#5c3566">A</text>
    </g>
  ),
  points: (
    <g fill="none" stroke="#ababa9">
      <path d="M4 4l10-2 7 7-3 13L2 20l6-6z" strokeDasharray="3 1.500" />
      <path d="M3 3h2v2H3zM13 1h2v2h-2zM20 8h2v2h-2zM7 13h2v2H7zM1 19h2v2H1zM17 21h2v2h-2z" fill="#f2f1f0" />
    </g>
  ),
  extrude: (
    <g>
      <path d="M5.500 6l3-3.500h11l3 3.500v15.500h-17z" fill="#c9c9c7" stroke="#b5b5b3" />
      <path d="M5.500 6h17" stroke="#ddd" />
      <path d="M1 13.500h5v-3l4.500 4.500L6 19.500v-3H1z" fill="#efefed" stroke="#b5b5b3" />
    </g>
  ),
};

const IconSvg = styled.svg`
  overflow: visible;
`;
function Icon({ name, size = 24 }) {
  return (
    <IconSvg width={size} height={size} viewBox="0 0 24 24" fill="none">
      {art[name]}
    </IconSvg>
  );
}

/* ---------- top bar ---------- */
const TopBar = styled.header`
  height: 27px;
  display: flex;
  align-items: center;
  background: linear-gradient(#56534c, #45433e 75%, #3e3d39);
  color: #dfdbd2;
  font-size: 14px;
  font-weight: 600;
  line-height: 28px;
  padding-left: 12px;
`;
const TopGap = styled.span`
  width: ${(p) => p.$w}px;
  flex: none;
`;
const Desktop = styled.div`
  width: 1366px;
  height: 768px;
  display: flex;
  flex-direction: column;
`;
const Below = styled.div`
  flex: 1;
  display: flex;
  min-height: 0;
`;
const Triangle = styled.i`
  flex: none;
  width: 0;
  height: 0;
  border: solid transparent;
  border-width: ${(p) => p.$h}px ${(p) => p.$s}px 0;
  border-top-color: ${(p) => p.$c || "#111"};
`;

/* ---------- dock ---------- */
const Dock = styled.nav`
  width: 59px;
  flex: none;
  background: #3e3d39;
  padding-top: 13px;
`;
const DockItem = styled.div`
  height: 56px;
  display: flex;
  align-items: center;
`;
const DockDots = styled.div`
  width: 9px;
  display: flex;
  flex-direction: column;
  align-items: center;
  gap: 2.5px;
`;
const Dot = styled.i`
  width: 5px;
  height: 5px;
  border-radius: 50%;
  background: #e95420;
`;
const DockTile = styled.div`
  width: 54px;
  height: 54px;
  margin-left: -7px;
  border-radius: 4px;
  display: flex;
  align-items: center;
  justify-content: center;
  background: ${(p) => (p.$on ? "#4f4e49" : "transparent")};
`;

const Gear = () => (
  <g>
    {Array.from({ length: 10 }, (_, i) => (
      <rect key={i} x="15" y="0.500" width="7" height="7" rx="1" fill="#e6e6e4" transform={`rotate(${i * 36} 18.500 18.500)`} />
    ))}
    <circle cx="18.500" cy="18.500" r="11" fill="none" stroke="#e6e6e4" strokeWidth="8" />
    <circle cx="18.500" cy="18.500" r="8.500" fill="#cfcfcd" stroke="#b0b0ae" strokeWidth="3" />
    <circle cx="18.500" cy="18.500" r="4" fill="#8b8b88" />
    <path d="M4 33L25 11" stroke="#8d1416" strokeWidth="6" strokeLinecap="round" />
    <path d="M4 32.500L24.500 11" stroke="#d8363a" strokeWidth="3.800" strokeLinecap="round" />
    <path d="M23 9q0-6 7-8l-1 6 4 2 4-4q0 7-5 8.500-2 .7-5-.5l-3 3-3-3z" fill="#e9e9e7" stroke="#9a9a98" strokeWidth="0.800" />
  </g>
);

const dockArt = {
  settings: <Gear />,
  software: (
    <g transform="translate(0 -1)">
      <path d="M12 8V5q0-3 3-3h6q3 0 3 3v3" fill="none" stroke="#aaa9a4" strokeWidth="2" />
      <path d="M4 6h28l1 29H3z" fill="#ecece8" />
      <path d="M4 6h28l.3 5q-14 5-28.600 0z" fill="#cbcbc5" />
      <path d="M10 9v3q8 6 16 0V9" fill="none" stroke="#fff" strokeWidth="1.500" />
      <circle cx="18" cy="22.500" r="7.200" fill="#7797c6" />
      <path d="M14.500 18.500v8M18 18.500v8M21.500 18.500v8M14 19.500h8M14 22.500h8M14 25.500h8" stroke="#fff" strokeWidth="1.200" strokeDasharray="2 1" />
    </g>
  ),
  files: (
    <g>
      <path d="M3 0.500h30l2 8v25q0 2-2 2H3q-2 0-2-2v-25z" fill="#c9c8c6" />
      <path d="M3 8h30v8H3z" fill="#57352a" />
      <path d="M4 10l26-1 2 2v5H4z" fill="#f5a04e" />
      <path d="M5 12h27v3H5z" fill="#fbd8a2" />
      <path d="M1 15h34v18.500q0 2-2 2H3q-2 0-2-2z" fill="#a9a8a6" />
      <path d="M1 15h34v2H1z" fill="#d9d8d6" />
      <rect x="13" y="22" width="10" height="8" rx="1.500" fill="#e9e9e7" stroke="#777" />
      <rect x="15.500" y="25" width="5" height="2.500" fill="#8a8a88" />
    </g>
  ),
  kraken: (
    <g>
      <circle cx="18" cy="18" r="17.300" fill="#10131f" stroke="#a8abad" strokeWidth="1" />
      <path d="M18 6q6 5 6 11l-2 3v5h-1.500v-4h-1.500v9h-2v-9h-1.500v4H14v-5l-2-3q0-6 6-11z" fill="#2c9f95" />
      <path d="M8 8q-6 9 0 16 3 3 6 5M28 8q6 9 0 16-3 3-6 5M11 10q-4 7 0 12M25 10q4 7 0 12" fill="none" stroke="#218a82" strokeWidth="1.800" />
    </g>
  ),
  meld: (
    <g>
      <rect x="0.500" y="0.500" width="35" height="35" rx="4" fill="#fb9a35" />
      <path d="M13 .5h18.500q4 0 4 4V16Q33 6 20 7 11 8 11 16 11 22 17 23 10 24 7 17 5 6 13 .5z" fill="#6a93c9" />
      <path d="M23 35.500H4.500q-4 0-4-4V20Q3 30 16 29 25 28 25 20 25 14 19 13 26 12 29 19 31 30 23 35.500z" fill="#6a93c9" />
      <path d="M35 16Q33 6 20 7 11 8 11 16 11 22 17 23M1 20Q3 30 16 29 25 28 25 20 25 14 19 13" fill="none" stroke="#fcc78e" strokeWidth="1" />
      <path d="M17 23q4 0 4-4 0-3-3-3-2.500.5-2 3" fill="none" stroke="#476ea8" strokeWidth="2.200" />
      <rect x="0.500" y="0.500" width="35" height="35" rx="4" fill="none" stroke="#a9703a" />
    </g>
  ),
  chrome: (
    <g>
      <circle cx="18" cy="18" r="18" fill="#ffcd40" />
      <path d="M18 18L2.400 9A18 18 0 0 1 33.600 9z" fill="#dd4b3e" />
      <path d="M18 9h15.600A18 18 0 0 0 2.400 9L10 21z" fill="#dd4b3e" />
      <path d="M2.400 9A18 18 0 0 0 18 36l8-13.500L18 26l-8-3.500z" fill="#17a05e" />
      <path d="M26 22.500L18 36a18 18 0 0 0 15.600-27H18z" fill="#ffcd40" />
      <circle cx="18" cy="18" r="8.300" fill="#f4f4f2" />
      <circle cx="18" cy="18" r="6.600" fill="#4688f4" />
    </g>
  ),
  firefox: (
    <g transform="translate(0 1)">
      <circle cx="19" cy="16" r="14" fill="#1e63d8" />
      <path d="M10 6q6-5 13-3-6 4-6 8z" fill="#30b7f2" />
      <path d="M3 4q2 1 3 4 2-2 5-2 0 2 3 3 3 0 4 1-1 3-4 4-1 4 4 5 3 0 5-1 0 4-5 6 9 2 12-5 2-8-3-15-1-4 0-7 9 6 9 19 0 17-18 18Q1 32 0 18 1 10 3 4z" fill="url(#foxg)" />
      <path d="M25 0q8 6 9 16-1 12-9 16 8-12 2-20-4-6-2-12z" fill="#ffd83a" />
    </g>
  ),
  teapot: (
    <g transform="translate(-1 0)">
      <path d="M3 8q-4-2-3-6 2-4 6-3t2 6q1 3-2 4v6H3z" fill="#f1f1ef" />
      <path d="M30 14q0-6 5-4.500t3 12.500q-2 5-9 6" fill="none" stroke="#e9d74e" strokeWidth="2.600" />
      <path d="M2 17h3q2 7 5 8v7Q2 27 2 17z" fill="#e8cf35" />
      <path d="M11 14h17q6 8 2 15-4 5-10 5T9 30q-4-8 2-16z" fill="#f1dc44" stroke="#bfa31a" strokeWidth="0.700" />
      <path d="M10 15q9-6 19 0z" fill="#fff2a0" stroke="#bfa31a" strokeWidth="0.700" />
      <circle cx="19.500" cy="10.500" r="2.500" fill="#f5e56a" />
      <path d="M12 19l2 3.500-2 3.500-2-3.500zM19.500 20l2.500 4-2.500 4-2.500-4zM27 19l2 3.500-2 3.500-2-3.500z" fill="#b3162c" />
      <path d="M13 34h13v2H13z" fill="#d9c12c" />
    </g>
  ),
  writer: (
    <g>
      <path d="M2-2h32v40H2z" fill="#6a6a66" />
      <path d="M3-1h17l13 13v25H3z" fill="#fdfdfc" />
      <path d="M3 20h30v17H3z" fill="#f3f3f1" />
      <path d="M20-1h13v13z" fill="#4b4b47" />
    </g>
  ),
  vscode: (
    <g>
      <path d="M2 5l22-3.500 3 29L6 35z" fill="#22252c" />
      <path d="M25 1l9 4-1 24-9 6-15-1 14-3z" fill="#2478ba" />
      <path d="M25 1l9 4-1 24-5 3z" fill="#3b9ce0" />
      <path d="M22 10l1 15L9 15.500M22 10L9 22" fill="none" stroke="#3a92d4" strokeWidth="2.400" />
    </g>
  ),
  atom: (
    <g>
      <circle cx="18" cy="18" r="17.500" fill="#f2f3ee" />
      <circle cx="18" cy="18" r="16" fill="url(#atomg)" />
      <g fill="none" stroke="#f4f8f0" strokeWidth="1.200">
        <ellipse cx="18" cy="18" rx="10.500" ry="4.200" transform="rotate(15 18 18)" />
        <ellipse cx="18" cy="18" rx="10.500" ry="4.200" transform="rotate(75 18 18)" />
        <ellipse cx="18" cy="18" rx="10.500" ry="4.200" transform="rotate(135 18 18)" />
      </g>
      <circle cx="18" cy="18" r="1.500" fill="#fff" />
    </g>
  ),
  evince: (
    <g>
      <rect x="1.500" y="0.500" width="33" height="35" rx="4" fill="#f7f7f6" stroke="#b5b5b3" strokeWidth="0.700" />
      <path d="M8 15q14-1 14-8-1-3.500-6-2Q9 8 9 14.500q2 6 10 5t16-5.500" fill="none" stroke="#d1343a" strokeWidth="1.500" />
      <path d="M15 20q10-1 20-7v3q-8 4-13 3.500-6 0-9 2.500z" fill="#e4585d" />
      <path d="M6 27.500h24M6 30h15" stroke="#c8c8c6" strokeWidth="1.300" />
    </g>
  ),
  apps: (
    <g fill="#f1f1ef">
      {[8, 18, 28].map((y) => [8, 18, 28].map((x) => <circle key={x + "-" + y} cx={x} cy={y} r="2.600" />))}
    </g>
  ),
};
const dock = [
  ["settings", 0], ["software", 0], ["files", 1], ["kraken", 0], ["meld", 0], ["chrome", 0],
  ["firefox", 1], ["teapot", 1], ["writer", 1, true], ["vscode", 0], ["atom", 1], ["evince", 4], ["apps", 0],
];

/* ---------- window chrome ---------- */
const Window = styled.main`
  flex: 1;
  min-width: 0;
  display: flex;
  flex-direction: column;
  background: #f2f1f0;
`;
const TitleBar = styled.div`
  height: 28px;
  flex: none;
  display: flex;
  align-items: center;
  padding-left: 514px;
  background: linear-gradient(#3a3934, #4f4c45);
  color: #dfdbd2;
  font-size: 14px;
  font-weight: 600;
`;
const WinButtons = styled.div`
  margin-left: 452px;
  display: flex;
  gap: 4px;
`;
const WinButton = styled.span`
  width: 16px;
  height: 16px;
  border-radius: 50%;
  display: flex;
  align-items: center;
  justify-content: center;
  border: 1px solid #3a3934;
  background: ${(p) => (p.$close ? "linear-gradient(#f58a62, #df4d1d)" : "linear-gradient(#8b8983, #65635c)")};
`;
const MenuBar = styled.div`
  height: 24px;
  flex: none;
  display: flex;
  align-items: center;
  gap: 12px;
  padding-left: 6px;
  background: #504d46;
  color: #dfdbd2;
  font-size: 14px;
  line-height: 26px;
`;
const CloseDoc = styled.span`
  margin-left: auto;
  align-self: stretch;
  width: 36px;
  background: #f2f1f0;
  display: flex;
  align-items: center;
  justify-content: center;
`;
const menus = [
  ["Fichier", 45], ["Édition", 48], ["Affichage", 64], ["Insertion", 60], ["Format", 50],
  ["Styles", 40], ["Tableau", 52], ["Outils", 40], ["Fenêtre", 52], ["Aide", 31],
];

/* ---------- toolbars ---------- */
const Toolbar = styled.div`
  height: ${(p) => p.$h || 39}px;
  flex: none;
  display: flex;
  align-items: center;
  padding: 0 0 1px 3px;
`;
const Grip = styled.i`
  width: 3px;
  height: 23px;
  margin-right: ${(p) => p.$gap}px;
  background: repeating-linear-gradient(#b4b3b0 0 3px, transparent 3px 4px);
`;
const Sep = styled.i`
  width: 8px;
  height: 29px;
  flex: none;
  display: flex;
  justify-content: center;
  &::after { content: ""; width: 1px; background: #d9d8d5; }
`;
const ToolBox = styled.span`
  width: ${(p) => (p.$split ? 44 : 33)}px;
  height: 34px;
  flex: none;
  display: flex;
  align-items: center;
  ${Triangle} { margin-left: 3px; }
`;
const ToolFace = styled.span`
  width: 32px;
  height: 34px;
  display: flex;
  align-items: center;
  padding-left: 4px;
  border-radius: 5px;
  ${(p) =>
    p.$active &&
    css`
      height: 33px;
      padding-left: 2px;
      border: 2px solid #a9a7a3;
      background: linear-gradient(#e4e3e1, #f6f5f4);
    `}
`;
function Tools({ list }) {
  return list.split(" ").map((t, i) => {
    if (t === "|") return <Sep key={i} />;
    const split = t.endsWith("+");
    const active = t.endsWith("*");
    const name = t.replace(/[+*]$/, "");
    return (
      <ToolBox key={i} $split={split}>
        <ToolFace $active={active}>
          <Icon name={name} />
        </ToolFace>
        {split && <Triangle $s={3} $h={3} $c={name === "redo" ? "#aaa" : "#111"} />}
      </ToolBox>
    );
  });
}
const Combo = styled.div`
  width: ${(p) => p.$w}px;
  height: 27px;
  flex: none;
  margin-top: 1px;
  margin-right: ${(p) => p.$mr || 0}px;
  border: 1px solid #a09e9a;
  border-radius: 5px;
  display: flex;
  align-items: center;
  justify-content: space-between;
  background: linear-gradient(#f4f4f3, #fff 5px);
  overflow: hidden;
  padding-left: 6px;
  font-size: 14px;
  color: ${(p) => p.$c || "#4a4a4a"};
`;
const ComboArrow = styled.span`
  width: 27px;
  align-self: stretch;
  border-left: 1px solid #c4c2bf;
  background: linear-gradient(#fff, #eeedec);
  display: flex;
  align-items: center;
  justify-content: center;
`;
const FindText = styled.span`
  display: flex;
  align-items: center;
  font-size: ${(p) => p.$s}px;
  color: ${(p) => p.$c || "#4a4a4a"};
  margin-right: ${(p) => p.$mr}px;
`;
const CheckBox = styled.span`
  width: 14px;
  height: 14px;
  border: 1px solid #aaa8a4;
  border-radius: 3px;
  background: #fff;
  margin-right: 7px;
`;

/* ---------- workspace ---------- */
const Workspace = styled.div`
  height: 473px;
  flex: none;
  display: flex;
`;
const Editor = styled.section`
  width: 1253px;
  flex: none;
  display: flex;
  flex-direction: column;
`;
const PageArea = styled.div`
  flex: 1;
  min-height: 0;
  overflow: hidden;
  padding-left: 189px;
`;
const Page = styled.article`
  width: 874px;
  height: 449px;
  background: #fff;
  box-shadow: 2px 0 3px #bdbcba, -1px 0 3px #bdbcba;
  padding-left: 45px;
  overflow: hidden;
`;
const DocTable = styled.div`
  width: 784px;
  margin-top: -3px;
  border-left: 1px solid #000;
  display: grid;
  grid-template-columns: 170px 212px 323px 78px;
  grid-template-rows: 61px 119px 119px 118px 119px;
  font-family: ${DOC};
  font-size: 15px;
  line-height: 17px;
  color: #000;
`;
const Cell = styled.div`
  border-right: 1px solid #000;
  border-bottom: 1px solid #000;
  padding: ${(p) => p.$pt || 16}px 0 0 8px;
  white-space: pre;
`;
const HeadCell = styled(Cell)`
  background: #d9d9d9;
  padding: 0 0 0 1px;
  font-size: 18px;
  line-height: 20px;
  display: flex;
  flex-direction: column;
  align-items: center;
  justify-content: center;
`;
const RateCell = styled(Cell)`
  padding: 0 7px ${(p) => p.$pb ?? 2}px 0;
  display: flex;
  align-items: center;
  justify-content: flex-end;
`;
const Para = styled.div`
  height: 17px;
  margin-bottom: ${(p) => (p.$tight ? 0 : 17)}px;
  display: flex;
`;
const Nbsp = styled.span`
  background: #c0c0c0;
`;
const Bad = styled.span`
  text-decoration: underline wavy #e02020 1px;
  text-decoration-skip-ink: none;
  text-underline-offset: 1px;
`;
const Caret = styled.i`
  width: 1px;
  height: 16px;
  margin-left: 3px;
  background: #000;
`;

const Period = ({ label, value, w, hard }) => (
  <Para>
    <Fit w={w}>
      {label}
      {hard ? <Nbsp>{"\u00a0"}</Nbsp> : " "}
      {": " + value}
    </Fit>
  </Para>
);

const Ruler = () => {
  const marks = [];
  for (let q = -41; q <= 42; q++) {
    const x = 427.5 + (q * 41.65) / 4;
    if (x < 2 || x > 870) continue;
    const n = Math.abs(q / 4);
    if (q % 4 === 0 && q !== 0) {
      marks.push(
        <g key={q}>
          <text x={x + (n < 10 ? -0.5 : 0)} y="14.500" fontSize="9" textAnchor="middle" fontFamily="Noto Sans" fill="#9a9894">{n}</text>
          <path d={`M${Math.round(x) + 0.5} 4v1M${Math.round(x) + 0.5} 18v1`} stroke="#9a9894" />
        </g>
      );
    } else if (Math.abs(q % 4) === 2) {
      marks.push(<path key={q} d={`M${Math.round(x) + 0.5} 10v3`} stroke="#9a9894" />);
    }
  }
  return (
    <svg width="876" height="24" viewBox="0 0 876 24" fill="none">
      <rect x="46" y="4" width="782" height="15" fill="#fff" />
      <path d="M.5 4.500h45v14H.5zM828.500 4.500h44v14h-44z" stroke="#b0aeab" fill="#f2f1f0" />
      {marks}
      <path d="M214.500 4v15M216.500 4v15M749.500 4v9M751.500 4v9" stroke="#a3a19e" />
      {[479, 531, 583, 635, 687, 739].map((x) => (
        <path key={x} d={`M${x}.500 16v3M${x - 2} 19.500h5`} stroke="#6f6d6a" />
      ))}
      <path d="M423.500 3.500h8v3l-3 5 3 5v3h-8v-3l3-5-3-5zM746.500 19.500v-3l4-4 4 4v3z" fill="#f8f8f7" stroke="#85837f" />
    </svg>
  );
};
const RulerRow = styled.div`
  height: 24px;
  flex: none;
  display: flex;
  align-items: center;
  padding-left: 8px;
  gap: 174px;
`;

/* ---------- right sidebar ---------- */
const SideWrap = styled.aside`
  flex: 1;
  display: flex;
  position: relative;
`;
const Splitter = styled.div`
  width: 7px;
  margin-left: 7px;
  border: 1px solid #aaa8a4;
  background: #f7f7f6;
`;
const SideTabs = styled.div`
  flex: 1;
  border-top: 1px solid #aaa8a4;
  border-bottom: 1px solid #aaa8a4;
  display: flex;
  flex-direction: column;
  align-items: center;
  padding-top: 11px;
`;
const SideBtn = styled.span`
  width: 32px;
  height: ${(p) => p.$h}px;
  display: flex;
  align-items: center;
  justify-content: center;
  border-radius: 4px;
  border: 1px solid ${(p) => (p.$on ? "#bdbbb8" : "transparent")};
`;
const SideRule = styled.i`
  width: 22px;
  height: 1px;
  margin: 9px 0 3px;
  background: #d6d5d2;
`;
const ScrollThumb = styled.i`
  position: absolute;
  left: 7px;
  top: 200px;
  width: 7px;
  height: 73px;
  background: #8f8e8a;
`;
const Deck = styled.i`
  position: absolute;
  left: 0;
  top: 226px;
  width: 7px;
  height: 15px;
  background: #f2926d;
`;
const DeckArrow = styled.i`
  position: absolute;
  left: 8px;
  top: 232px;
  border: solid transparent;
  border-width: 4px 0 4px 5px;
  border-left-color: #f4f4f3;
`;

/* ---------- status bar ---------- */
const StatusBar = styled.footer`
  height: 21px;
  flex: none;
  border-top: 1px solid #aaa8a4;
  display: flex;
  align-items: center;
  font-size: 12px;
  color: #4a4a4a;
`;
const StatusCell = styled.div`
  width: ${(p) => p.$w}px;
  height: 16px;
  flex: none;
  display: flex;
  align-items: center;
  justify-content: ${(p) => (p.$center ? "center" : "flex-start")};
  padding-left: ${(p) => (p.$center ? 1 : p.$pl || 8)}px;
  border-right: ${(p) => (p.$last ? 0 : 1)}px solid #8f8d8a;
`;

export default function App() {
  return (
    <>
      <Global />
      <Defs />
      <Desktop>
        <TopBar>
          <Fit w={63}>Activités</Fit>
          <TopGap $w={22} />
          <svg width="13" height="16" viewBox="0 0 13 16">
            <path d="M1 1h7l4 4v10H1z" fill="#f3f3f1" />
            <path d="M8 1h4v4z" fill="#77756f" />
          </svg>
          <TopGap $w={8} />
          <Fit w={80}>LibreOffice</Fit>
          <TopGap $w={6} />
          <Triangle $s={5} $h={5} $c="#cfcbc2" />
          <TopGap $w={434} />
          <Fit w={70}>ven. 14:16</Fit>
          <TopGap $w={478} />
          <Fit w={11}>fr</Fit>
          <TopGap $w={10} />
          <Triangle $s={5} $h={5} $c="#cfcbc2" />
          <TopGap $w={32} />
          <svg width="16" height="16" viewBox="0 0 16 16" fill="none" stroke="#dfdbd2">
            <path d="M1 5q7-6 14 0" opacity=".5" strokeWidth="1.700" />
            <path d="M3 8q5-4 10 0" strokeWidth="1.700" />
            <path d="M5 10.500q3-2.500 6 0" strokeWidth="1.500" />
            <circle cx="8" cy="13" r="1.800" fill="#dfdbd2" stroke="none" />
          </svg>
          <TopGap $w={11} />
          <svg width="18" height="17" viewBox="0 0 18 17" fill="none" stroke="#dfdbd2">
            <path d="M1 6h3l4-4v13l-4-4H1z" fill="#dfdbd2" stroke="none" />
            <path d="M10 6q1 2.500 0 5" strokeWidth="1.400" />
            <path d="M12 4q2 4 .5 8M14.500 2q3 5 1 9" opacity=".5" strokeWidth="1.400" />
            <path d="M12 12l4 4M16 12l-4 4" strokeWidth="1.600" />
          </svg>
          <TopGap $w={12} />
          <svg width="17" height="18" viewBox="0 0 17 18" fill="none" stroke="#dfdbd2">
            <path d="M8 16H2.500V3.500H5V1.500h5v2h3V8" strokeWidth="2" />
            <path d="M4 13.500h4" strokeWidth="1.500" />
            <path d="M12.500 8l-4.500 5h3.500l-1.500 4 5-5.500h-3.300z" fill="#dfdbd2" stroke="none" />
          </svg>
          <TopGap $w={8} />
          <Triangle $s={5} $h={5} $c="#cfcbc2" />
        </TopBar>
        <Below>
          <Dock>
            {dock.map(([name, dots, on]) => (
              <DockItem key={name}>
                <DockDots>
                  {Array.from({ length: dots }, (_, i) => (
                    <Dot key={i} />
                  ))}
                </DockDots>
                <DockTile $on={on}>
                  <svg width="36" height="36" viewBox="0 0 36 36" overflow="visible" fill="none">
                    {dockArt[name]}
                  </svg>
                </DockTile>
              </DockItem>
            ))}
          </Dock>
          <Window>
            <TitleBar>
              <Fit w={278}>2018_IGE_E_V2.odt - LibreOffice Writer</Fit>
              <WinButtons>
                <WinButton>
                  <svg width="8" height="8"><path d="M0 4.500h8" stroke="#3a3934" /></svg>
                </WinButton>
                <WinButton>
                  <svg width="8" height="8"><path d="M.5 1.500h7v5h-7z" fill="none" stroke="#3a3934" /></svg>
                </WinButton>
                <WinButton $close>
                  <svg width="8" height="8"><path d="M1.500 1.500l5 5M6.500 1.500l-5 5" stroke="#4a2010" strokeWidth="1.200" /></svg>
                </WinButton>
              </WinButtons>
            </TitleBar>
            <MenuBar>
              {menus.map(([t, w]) => (
                <Fit key={t} w={w}>{t}</Fit>
              ))}
              <CloseDoc>
                <svg width="7" height="7"><path d="M.7.7l5.500 5.500M6.200.7L.7 6.200" stroke="#444" strokeWidth="1.100" /></svg>
              </CloseDoc>
            </MenuBar>
            <Toolbar>
              <Grip $gap={4} />
              <Tools list="newDoc+ open+ save+ | pdf print preview | cut copy paste+ | brush | undo+ redo+ | find spell pilcrow | table+ image chart textbox | pagebreak field+ omega | link footnote endnote bookmark crossref | note changes | line diamond+ shapes*" />
            </Toolbar>
            <Toolbar>
              <Grip $gap={7} />
              <Combo $w={142} $mr={1}>
                <Fit w={102}>Style par défau</Fit>
                <ComboArrow><Triangle $s={5} $h={5} /></ComboArrow>
              </Combo>
              <Tools list="styleUpdate styleNew |" />
              <TopGap $w={1} />
              <Combo $w={142} $mr={10}>
                <Fit w={31}>Arial</Fit>
                <ComboArrow><Triangle $s={5} $h={5} /></ComboArrow>
              </Combo>
              <Combo $w={71} $mr={1}>
                <Fit w={16}>10</Fit>
                <ComboArrow><Triangle $s={5} $h={5} /></ComboArrow>
              </Combo>
              <Tools list="| bold italic underline strike | superscript subscript | clearFmt | fontColor+ highlight+ | bullets+ numbers+ | alignLeft* alignCenter alignRight justify | lineSpacing+ spaceUp spaceDown | indent outdent" />
            </Toolbar>
            <Workspace>
              <Editor>
                <RulerRow>
                  <svg width="7" height="6"><path d="M1 0v5h6" fill="none" stroke="#8f8d8a" strokeWidth="2" /></svg>
                  <Ruler />
                </RulerRow>
                <PageArea>
                  <Page>
                    <DocTable>
                      <HeadCell><Fit w={61}>Période</Fit></HeadCell>
                      <HeadCell><Fit w={89}>Entreprises</Fit></HeadCell>
                      <HeadCell><Fit w={153}>Fonctions exercées</Fit></HeadCell>
                      <HeadCell>
                        <Fit w={56}>Quotité</Fit>
                        <Fit w={19}>de</Fit>
                        <Fit w={56}>service</Fit>
                      </HeadCell>

                      <Cell>
                        <Period label="Du" value="07/12/2000" w={104} hard />
                        <Period label="Au" value="07/12/2001" w={103} hard />
                        <Period label="Durée" value="1 an" w={81} hard />
                      </Cell>
                      <Cell>
                        <Para><Fit w={166}>Ville de <Bad>Seyssinet</Bad> <Bad>Pariset</Bad></Fit></Para>
                      </Cell>
                      <Cell>
                        <Para $tight><Fit w={60}><Bad>Faciliteur</Bad></Fit><Caret /></Para>
                        <Para><Fit w={131}>culturel et technique</Fit></Para>
                      </Cell>
                      <RateCell><Fit w={37}>100%</Fit></RateCell>

                      <Cell>
                        <Period label="Du" value="10/12/2001" w={104} />
                        <Period label="Au" value="15/06/2006" w={103} />
                        <Period label="Durée" value="5 ans 6 mois" w={135} />
                      </Cell>
                      <Cell><Para><Fit w={188}>Dyade Art et Développement</Fit></Para></Cell>
                      <Cell><Para><Fit w={150}>Technicien Audiovisuel</Fit></Para></Cell>
                      <RateCell><Fit w={37}>100%</Fit></RateCell>

                      <Cell>
                        <Period label="Du" value="27/10/2008" w={104} hard />
                        <Period label="Au" value="27/02/2009" w={103} hard />
                        <Period label="Durée" value="5 mois" w={95} hard />
                      </Cell>
                      <Cell><Para><Fit w={121}>Nodule Multimédia</Fit></Para></Cell>
                      <Cell><Para><Fit w={118}>Développeur Web</Fit></Para></Cell>
                      <RateCell $pb={0}><Fit w={37}>100%</Fit></RateCell>

                      <Cell $pt={17}><Period label="Du" value="01/09/2010" w={104} hard /></Cell>
                      <Cell $pt={17}>
                        <Para><Fit w={174}><Bad>APC</Bad> By Schneider <Bad>Electric</Bad></Fit></Para>
                      </Cell>
                      <Cell $pt={17}><Para><Fit w={223}>Ingénieur en développement et en</Fit></Para></Cell>
                      <Cell />
                    </DocTable>
                  </Page>
                </PageArea>
              </Editor>
              <SideWrap>
                <Splitter />
                <SideTabs>
                  <SideBtn $h={18}>
                    <svg width="10" height="11">
                      <path d="M0 1.500h7M0 4.500h7M0 7.500h4" stroke="#333" strokeWidth="1.200" />
                      <path d="M4 7h6L7 10z" fill="#0c1a3a" />
                    </svg>
                  </SideBtn>
                  <SideRule />
                  <SideBtn $h={32} $on>
                    <svg width="24" height="24" viewBox="0 0 24 24">
                      <path d="M1.500 4.500L5 7l2.500-1.500L7 2.500 5.500 1q5-.5 6.500 3.500v3l6.500 7q4-.5 5 4l-1 3-3-2.500-2.500 1.500 0 3q-3.500-1-3.700-6L7 10.500q-5 .5-5.500-6z" fill="#f8f8f7" stroke="#7c7f7c" strokeWidth="1.100" />
                    </svg>
                  </SideBtn>
                  <SideBtn $h={37}>
                    <svg width="24" height="24" viewBox="0 0 24 24">
                      <path d="M3.500 3q0-1.500 1.500-1.500h10l5.500 5V20q0 1.500-1.500 1.500H5q-1.500 0-1.500-1.500z" fill="url(#paper)" stroke="#8b8e8b" />
                      <path d="M15 1.500q1 3-.5 5 4-1 6 .5" fill="#fff" stroke="#a5a8a5" />
                    </svg>
                  </SideBtn>
                  <SideBtn $h={35}>
                    <svg width="24" height="24" viewBox="0 0 24 24">
                      <path d="M4 1h18v5h-1.500L19 4h-4v15h2v2H9v-2h2V4H7L5.500 6H4z" fill="#4b504d" stroke="#2a2d2b" strokeWidth="0.700" />
                      <path d="M.5 6v16.500H22z" fill="#7ccf3e" stroke="#4e9a06" />
                      <path d="M4.500 14v5h6z" fill="#d6f0bf" stroke="#4e9a06" />
                    </svg>
                  </SideBtn>
                  <SideBtn $h={34}>
                    <svg width="24" height="24" viewBox="0 0 24 24">
                      <path d="M8 6l4-4 4 4" fill="none" stroke="#777" />
                      <rect x="2" y="6" width="20" height="14" rx="1" fill="url(#sunset)" stroke="#a86a10" strokeWidth="2.500" />
                      <circle cx="8" cy="16" r="2.500" fill="#fff3b8" />
                      <path d="M15 19v-6l-3-4M15 14l4-4M15 13l1-4" stroke="#3a2810" fill="none" />
                    </svg>
                  </SideBtn>
                  <SideBtn $h={36}>
                    <svg width="24" height="24" viewBox="0 0 24 24">
                      <circle cx="12" cy="12" r="9.800" fill="#f7f7f6" stroke="#8b8e8b" strokeWidth="2.400" />
                      <circle cx="12" cy="12" r="7.500" fill="none" stroke="#d3d3d1" strokeDasharray="1 2" />
                      <path d="M7 6.500l6.500 4-3 3z" fill="#d8222a" />
                      <path d="M17 17.500l-6.500-4 3-3z" fill="#3465a4" />
                    </svg>
                  </SideBtn>
                </SideTabs>
                <ScrollThumb />
                <Deck />
                <DeckArrow />
              </SideWrap>
            </Workspace>
            <Toolbar>
              <Grip $gap={6} />
              <Tools list="rowAbove rowBelow colLeft colRight | delRow delCol delTable | selCell selTable | merge splitV splitH | tableOpt+ | vTop* vMid vBot | bgColor+ autofmt | borders+ borderStyle+ borderColor+ | money percent decimal numFmt | caption sort | protect unprotect | sum formula | tableProps" />
            </Toolbar>
            <Toolbar>
              <Grip $gap={6} />
              <Tools list="close" />
              <TopGap $w={1} />
              <Combo $w={248} $c="#8a8885">
                <Fit w={76}>Rechercher</Fit>
                <ComboArrow><Triangle $s={5} $h={5} /></ComboArrow>
              </Combo>
              <Tools list="prev nextDim" />
              <TopGap $w={4} />
              <FindText $s={12} $c="#8f8d8a" $mr={11}><Fit w={90}>Tout rechercher</Fit></FindText>
              <CheckBox />
              <FindText $s={14} $mr={2}><Fit w={123}>Respecter la casse</Fit></FindText>
              <Tools list="| find |" />
              <TopGap $w={4} />
              <FindText $s={12} $mr={7}><Fit w={71}>Naviguer par</Fit></FindText>
              <Tools list="prev next |" />
            </Toolbar>
            <Toolbar>
              <Grip $gap={6} />
              <Tools list="cursor | line arrow+ pencil+ curve polygon | rect roundRect square ellipse circle triangle rtriangle | diamond+ smiley+ dblArrow+ star+ callout+ flow+ | comment | textbox fontwork | points extrude" />
            </Toolbar>
            <StatusBar>
              <StatusCell $w={151} $pl={10}><Fit w={71}>Page 8 de 15</Fit></StatusCell>
              <StatusCell $w={261}><Fit w={166}>3 068 mots, 20 518 caractères</Fit></StatusCell>
              <StatusCell $w={157}><Fit w={88}>Style par défaut</Fit></StatusCell>
              <StatusCell $w={169} $center><Fit w={92}>Français (France)</Fit></StatusCell>
              <StatusCell $w={68} />
              <StatusCell $w={29}>
                <svg width="14" height="12"><path d="M1 3h8v6H1z" fill="#8a8885" /><path d="M9.500 1.500h4M9.500 10.500h4M11.500 2v9" stroke="#8a8885" /></svg>
              </StatusCell>
              <StatusCell $w={29} $pl={9}>
                <svg width="14" height="12">
                  <path d="M1.500.5h8v10h-8z" fill="#f8f8f7" stroke="#a09e9a" />
                  <path d="M9 3.500v5M6.800 4.800l4.400 2.400M11.200 4.800L6.800 7.200" stroke="#b3161c" strokeWidth="1.100" />
                </svg>
              </StatusCell>
              <StatusCell $w={173} $pl={69}><Fit w={66}>Tableau6:C9</Fit></StatusCell>
              <StatusCell $w={76} $pl={11}>
                <svg width="56" height="12" fill="none">
                  <path d="M1.500 1.500h4l3 3v6h-7zM5.500 1.500v3h3" stroke="#444" strokeWidth="1.100" />
                  <path d="M15.500 1.500h4l3 3v6h-7zM19.500 1.500v3h3M25.500 1.500h4l3 3v6h-7zM29.500 1.500v3h3M43.500 1.500h-2l-3 3v6h15v-6l-3-3h-4v9M42.500 1.500v3h-3M50.500 1.500v3h3M43.500 1.500h2v9" stroke="#8f8d8a" />
                </svg>
              </StatusCell>
              <StatusCell $w={143} $pl={10}>
                <svg width="126" height="14" fill="none">
                  <path d="M1 7h8M117 7h8M121 3v8" stroke="#777" strokeWidth="2" />
                  <path d="M14 7h97M24.500 2v10" stroke="#b0aeab" strokeWidth="2" />
                  <circle cx="62" cy="7" r="3.800" fill="#fff" stroke="#8f8d8a" />
                </svg>
              </StatusCell>
              <StatusCell $w={50} $last $pl={7}><Fit w={34}>110 %</Fit></StatusCell>
            </StatusBar>
          </Window>
        </Below>
      </Desktop>
    </>
  );
}
